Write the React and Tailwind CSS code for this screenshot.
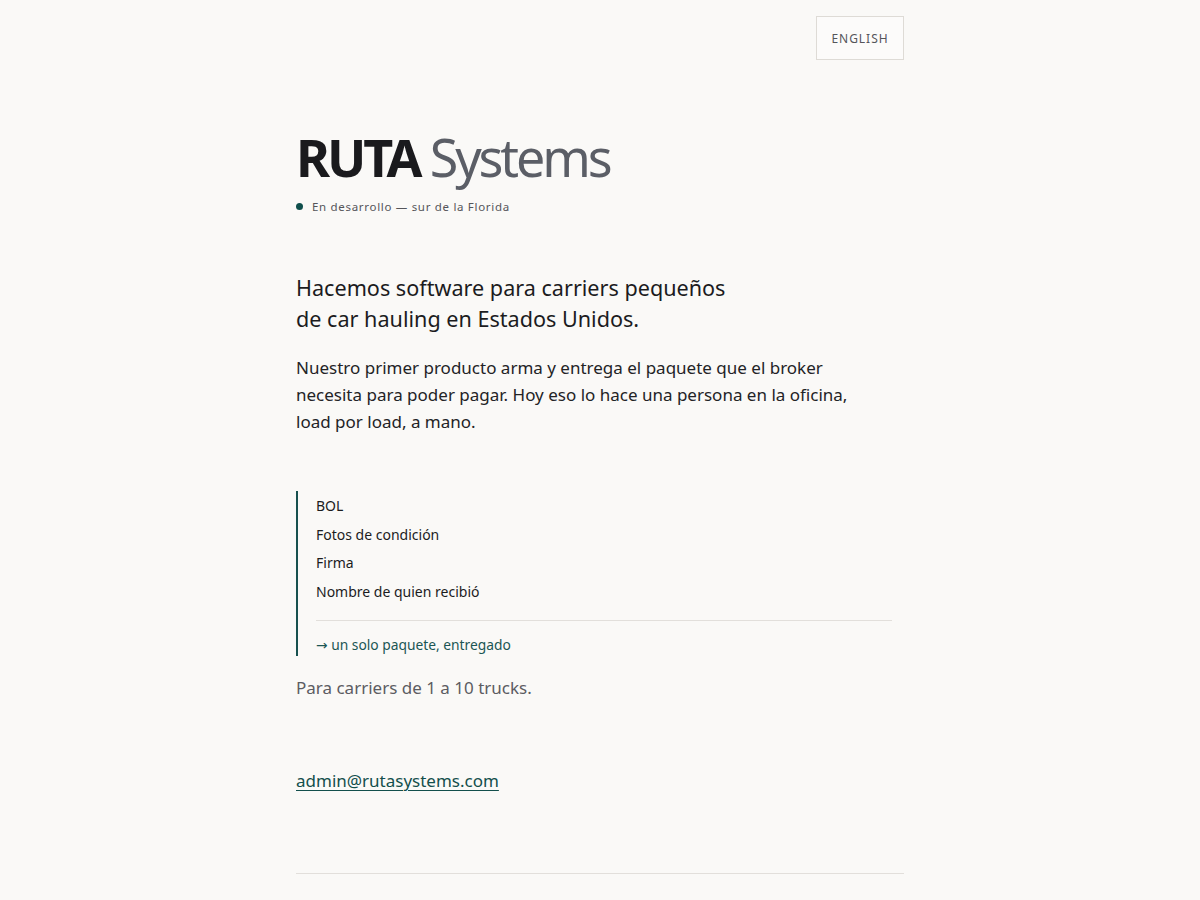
export default function App() {
  return (
    <div className="min-h-screen bg-[#faf9f7] text-[#1c1c1e]" style={{ fontFamily: '"Noto Sans", sans-serif' }}>
      <div className="mx-auto w-[608px]">
        <div className="flex justify-end pt-4">
          <button className="h-11 w-[88px] border border-[#dedbd6] bg-[#fcfbfa] pt-px text-[12px] tracking-[0.08em] text-[#55555a]">
            ENGLISH
          </button>
        </div>
        <h1 className="mt-[71px] text-[52px] leading-none tracking-[-0.06em]">
          <span className="font-bold text-[#1a1a1d]">RUTA</span>{" "}
          <span className="font-normal text-[#5b5e66]">Systems</span>
        </h1>
        <div className="mt-[15px] flex h-[17px] items-center gap-[9px] text-[11.5px] tracking-[0.06em] text-[#55555a]">
          <span className="h-[7px] w-[7px] rounded-full bg-[#0f4f4c]" />
          <span>En desarrollo — sur de la Florida</span>
        </div>
        <p className="mt-[57px] text-[21.6px] leading-[31px] text-[#1c1c1e]">
          Hacemos software para carriers pequeños
          <br />
          de car hauling en Estados Unidos.
        </p>
        <p className="mt-[20px] max-w-[570px] text-[17px] leading-[27px] text-[#232326]">
          Nuestro primer producto arma y entrega el paquete que el broker necesita para poder pagar. Hoy eso lo hace una persona en la oficina, load por load, a mano.
        </p>
        <div className="mt-[56px] w-[596px] border-l-2 border-[#17514f] pl-[18px]">
          <ul className="flex flex-col gap-[7.7px] pt-[4px] text-[14px] leading-[21px] text-[#1c1c1e]">
            <li>BOL</li>
            <li>Fotos de condición</li>
            <li>Firma</li>
            <li>Nombre de quien recibió</li>
          </ul>
          <div className="mt-[18px] border-t border-[#e2dfdb]" />
          <div className="pt-[13px] text-[13.8px] leading-[21px] text-[#1b5654]">
            <span style={{ fontFamily: '"DejaVu Sans", sans-serif' }}>→</span> un solo paquete, entregado
          </div>
        </div>
        <p className="mt-[20px] text-[17px] leading-[24px] text-[#5c5c62]">Para carriers de 1 a 10 trucks.</p>
        <p className="mt-[68px] text-[17px] leading-[26px]">
          <a href="#" className="text-[#134f4c] underline underline-offset-[3px] decoration-1">admin@rutasystems.com</a>
        </p>
        <div className="mt-[79px] border-t border-[#e2dfdb]" />
      </div>
    </div>
  );
}
